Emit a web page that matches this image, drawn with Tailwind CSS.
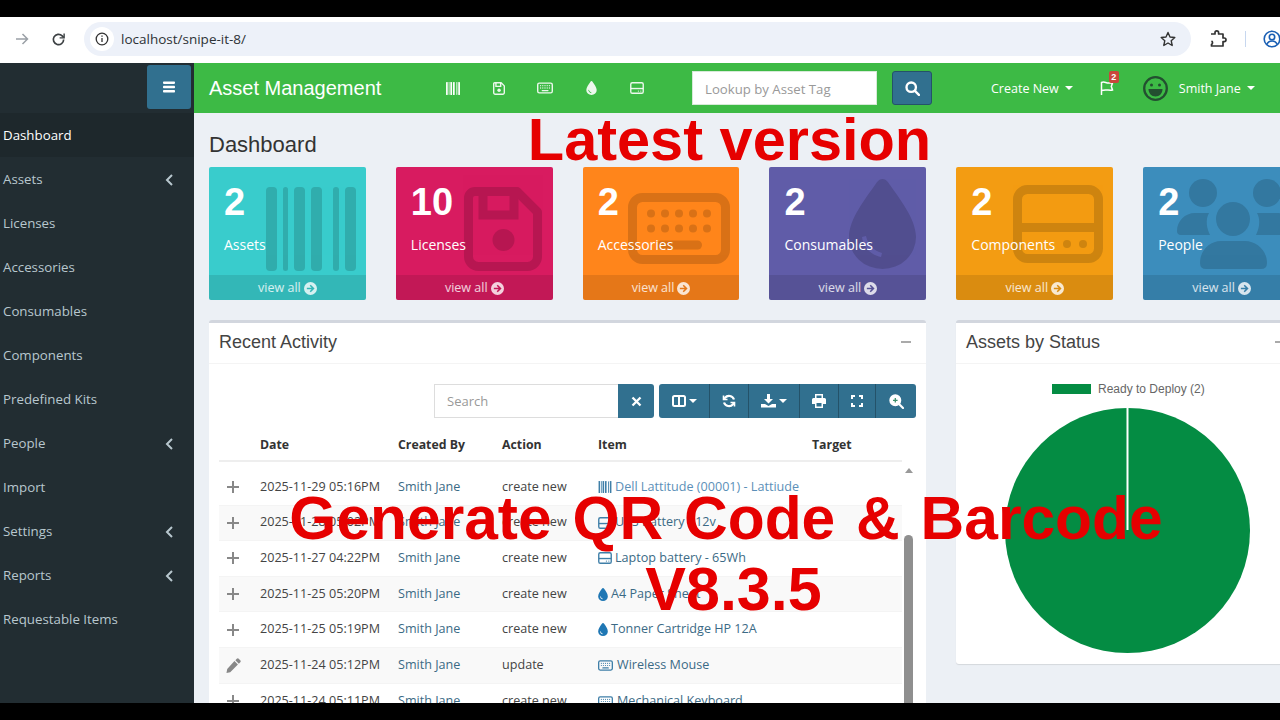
<!DOCTYPE html>
<html lang="en">
<head>
<meta charset="utf-8">
<title>Asset Management</title>
<script src="https://cdn.jsdelivr.net/npm/@tailwindcss/browser@4"></script>
</head>
<body class="bg-black">
<svg class="absolute w-0 h-0" aria-hidden="true">
  <symbol id="barcode" viewBox="0 0 90 84"><rect x="0" width="11" height="84" rx="4"/><rect x="17" width="5" height="84" rx="2.5"/><rect x="28" width="11" height="84" rx="4"/><rect x="45" width="11" height="84" rx="4"/><rect x="67" width="6" height="84" rx="3"/><rect x="79" width="11" height="84" rx="4"/></symbol>
  <symbol id="save" viewBox="0 0 78 84"><path fill="none" stroke="currentColor" stroke-width="9" stroke-linejoin="round" d="M11 4.5H53L73.500 25V69A10 10 0 0 1 63.500 79.500H14.500A10 10 0 0 1 4.500 69V11A6.500 6.500 0 0 1 11 4.500Z"/><path fill="none" stroke="currentColor" stroke-width="9" d="M19 6V28H50V6"/><circle cx="39.500" cy="53" r="11"/></symbol>
  <symbol id="keyboard" viewBox="0 0 102 71"><rect x="4.500" y="4.500" width="93" height="62" rx="10" fill="none" stroke="currentColor" stroke-width="9"/><g><circle cx="23" cy="20.500" r="4"/><circle cx="37" cy="20.500" r="4"/><circle cx="51" cy="20.500" r="4"/><circle cx="65" cy="20.500" r="4"/><circle cx="79" cy="20.500" r="4"/><circle cx="23" cy="35.500" r="4"/><circle cx="37" cy="35.500" r="4"/><circle cx="51" cy="35.500" r="4"/><circle cx="65" cy="35.500" r="4"/><circle cx="79" cy="35.500" r="4"/></g><rect x="29" y="47.500" width="45" height="9" rx="4.500"/></symbol>
  <symbol id="drop" viewBox="0 0 67 90"><path fill-rule="evenodd" d="M33.500 0C37 0 39 3 41 6C50 19 67 40 67 58A33.500 32 0 0 1 0 58C0 40 17 19 26 6C28 3 30 0 33.500 0ZM13 58C14 68 22 76 32 78L33 74C25 72 19 66 17 57Z"/></symbol>
  <symbol id="hdd" viewBox="0 0 90 78"><rect x="4.500" y="4.500" width="81" height="69" rx="10" fill="none" stroke="currentColor" stroke-width="9"/><rect x="5" y="38" width="80" height="9"/><circle cx="54" cy="59" r="4"/><circle cx="70" cy="59" r="4"/></symbol>
  <symbol id="users" viewBox="0 0 123 90"><circle cx="26" cy="14" r="14"/><circle cx="90" cy="14" r="14"/><circle cx="56" cy="40" r="17"/><path d="M0 52C0 42 8 34 18 34H32C28 41 30 50 33 56H4Q0 56 0 52Z"/><path d="M123 52C123 42 110 34 100 34H80C84 41 82 50 79 56H119Q123 56 123 52Z"/><path d="M23 84C23 72 32 62 44 62H68C80 62 90 72 90 84Q90 90 84 90H29Q23 90 23 84Z"/></symbol>
  <symbol id="go" viewBox="0 0 16 16"><path fill-rule="evenodd" d="M8 0a8 8 0 1 1 0 16A8 8 0 0 1 8 0ZM8.300 3.300 7 4.600 9.400 7H3.500v2h5.900L7 11.400l1.300 1.300L13 8Z"/></symbol>
  <symbol id="plus" viewBox="0 0 14 14"><path fill="none" stroke="currentColor" stroke-width="2" d="M7 1v12M1 7h12"/></symbol>
  <symbol id="pencil" viewBox="0 0 16 16"><path d="M11.500.8a1.500 1.500 0 0 1 2.100 0l1.600 1.600a1.500 1.500 0 0 1 0 2.100l-1.500 1.500L10 2.300ZM9 3.300 12.700 7l-8.200 8.200-4 .8.800-4.200Z"/></symbol>
  <symbol id="chev" viewBox="0 0 8 12"><path fill="none" stroke="currentColor" stroke-width="2" d="M6.500 1 1.500 6l5 5"/></symbol>
</svg>

<div class="relative w-[1280px] h-[720px] overflow-hidden flex flex-col bg-black font-['Open_Sans',sans-serif]">
  <!-- browser chrome -->
  <div class="h-[17px] shrink-0 bg-black"></div>
  <div class="h-[46px] shrink-0 bg-white flex items-center pl-[15px] pb-[2px] text-[#3c4043]">
    <svg class="shrink-0 w-[14px] h-[14px] text-[#9aa0a6]" viewBox="0 0 14 14" fill="none" stroke="currentColor" stroke-width="1.500"><path d="M1 7h11.500M7.500 2l5 5-5 5"/></svg>
    <svg class="shrink-0 ml-[22px] w-[15px] h-[15px]" viewBox="0 0 16 16" fill="none" stroke="currentColor" stroke-width="1.800"><path d="M13.500 8a5.500 5.500 0 1 1-1.600-3.900L13.500 5.700"/><path d="M14 1.500v4.800H9.200" stroke-width="1.500"/></svg>
    <div class="shrink-0 ml-[18px] w-[1107px] h-[34px] rounded-full bg-[#edf1f9] flex items-center pl-[6px]">
      <div class="w-[24px] h-[24px] rounded-full bg-white flex items-center justify-center">
        <svg class="w-[14px] h-[14px]" viewBox="0 0 14 14" fill="none" stroke="#333" stroke-width="1.300"><circle cx="7" cy="7" r="5.800"/><path d="M7 6v4M7 3.600v1.200"/></svg>
      </div>
      <span class="ml-[7px] text-[13.500px] text-[#2d3136]">localhost/snipe-it-8/</span>
      <svg class="ml-auto mr-[15px] w-[16px] h-[16px]" viewBox="0 0 16 16" fill="none" stroke="#333" stroke-width="1.400" stroke-linejoin="round"><path d="M8 1.500 10 6l4.800.5-3.600 3.200 1 4.800L8 12l-4.200 2.500 1-4.800L1.200 6.500 6 6Z"/></svg>
    </div>
    <svg class="shrink-0 ml-[18px] w-[18px] h-[18px]" viewBox="0 0 18 18" fill="none" stroke="#333" stroke-width="1.700" stroke-linejoin="round"><path d="M2 4h4V2.700a1.800 1.800 0 0 1 3.600 0V4h4.400v4h1.200a1.800 1.800 0 0 1 0 3.600H14V16H2.500v-1.500a2 2 0 0 0 0-3.500V11"/></svg>
    <div class="shrink-0 ml-[18px] w-px h-[16px] bg-[#c7d7ef]"></div>
    <svg class="ml-[17px] w-[18px] h-[18px] shrink-0" viewBox="0 0 18 18" fill="none" stroke="#1a5fb4" stroke-width="1.600"><circle cx="9" cy="9" r="7.800"/><circle cx="9" cy="7" r="2.700"/><path d="M3.800 14.500c1-2.500 3-3.500 5.200-3.500s4.200 1 5.200 3.500"/></svg>
  </div>

  <div class="h-[640px] shrink-0 flex overflow-hidden">
    <!-- sidebar -->
    <aside class="w-[194px] shrink-0 bg-[#222d32] text-[#b8c7ce] text-[13.300px]">
      <div class="h-[50px] flex items-start justify-end pt-[2px] pr-[3px]">
        <div class="w-[44px] h-[44px] rounded-[3px] bg-[#31708f] flex items-center justify-center">
          <svg class="w-[12px] h-[12px]" viewBox="0 0 12 12" fill="#fff"><rect y="0.500" width="12" height="2.400" rx="0.800"/><rect y="4.800" width="12" height="2.400" rx="0.800"/><rect y="9.100" width="12" height="2.400" rx="0.800"/></svg>
        </div>
      </div>
      <nav>
        <div class="h-[44px] pt-[2px] pl-[3px] flex items-center bg-[#1e282c] text-white">Dashboard</div>
        <div class="h-[44px] pt-[2px] pl-[3px] pr-[20px] flex items-center justify-between">Assets<svg class="w-[9px] h-[12px]"><use href="#chev"/></svg></div>
        <div class="h-[44px] pt-[2px] pl-[3px] flex items-center">Licenses</div>
        <div class="h-[44px] pt-[2px] pl-[3px] flex items-center">Accessories</div>
        <div class="h-[44px] pt-[2px] pl-[3px] flex items-center">Consumables</div>
        <div class="h-[44px] pt-[2px] pl-[3px] flex items-center">Components</div>
        <div class="h-[44px] pt-[2px] pl-[3px] flex items-center">Predefined Kits</div>
        <div class="h-[44px] pt-[2px] pl-[3px] pr-[20px] flex items-center justify-between">People<svg class="w-[9px] h-[12px]"><use href="#chev"/></svg></div>
        <div class="h-[44px] pt-[2px] pl-[3px] flex items-center">Import</div>
        <div class="h-[44px] pt-[2px] pl-[3px] pr-[20px] flex items-center justify-between">Settings<svg class="w-[9px] h-[12px]"><use href="#chev"/></svg></div>
        <div class="h-[44px] pt-[2px] pl-[3px] pr-[20px] flex items-center justify-between">Reports<svg class="w-[9px] h-[12px]"><use href="#chev"/></svg></div>
        <div class="h-[44px] pt-[2px] pl-[3px] flex items-center">Requestable Items</div>
      </nav>
    </aside>

    <div class="w-[1086px] shrink-0 flex flex-col overflow-hidden">
      <!-- top nav -->
      <header class="h-[50px] shrink-0 bg-[#3dba45] flex items-center text-white pl-[15px]">
        <span class="w-[232px] shrink-0 text-[20px] font-['Liberation_Sans',sans-serif] leading-none">Asset Management</span>
        <div class="w-[24px] flex justify-center"><svg class="w-[14px] h-[13px] fill-current text-white"><use href="#barcode"/></svg></div>
        <div class="ml-[22px] w-[24px] flex justify-center"><svg class="w-[12px] h-[13px] fill-current text-white/90"><use href="#save"/></svg></div>
        <div class="ml-[22px] w-[24px] flex justify-center"><svg class="w-[16px] h-[12px] fill-current text-white/90"><use href="#keyboard"/></svg></div>
        <div class="ml-[22px] w-[24px] flex justify-center"><svg class="w-[11px] h-[14px] fill-current text-white/90"><use href="#drop"/></svg></div>
        <div class="ml-[22px] w-[24px] flex justify-center"><svg class="w-[14px] h-[12px] fill-current text-white/90"><use href="#hdd"/></svg></div>
        <input class="ml-[43px] w-[185px] h-[34px] shrink-0 bg-white border border-[#d7ead8] px-[12px] pt-[2px] text-[13.200px] placeholder:text-[#999] outline-none" placeholder="Lookup by Asset Tag">
        <div class="ml-[15px] w-[40px] h-[34px] shrink-0 rounded-[3px] bg-[#31708f] border border-[#245269] flex items-center justify-center">
          <svg class="w-[15px] h-[15px]" viewBox="0 0 14 14" fill="none" stroke="#fff" stroke-width="2.200"><circle cx="5.800" cy="5.800" r="4.400"/><path d="M9 9l4 4" stroke-linecap="round"/></svg>
        </div>
        <span class="ml-[59px] pt-[2px] text-[12.500px] whitespace-nowrap">Create New</span>
        <span class="ml-[6px] border-x-[4px] border-x-transparent border-t-[4px] border-t-white"></span>
        <div class="relative ml-[27px] w-[14px] h-[14px] shrink-0">
          <svg class="w-[14px] h-[14px]" viewBox="0 0 14 14" fill="none" stroke="#fff" stroke-width="1.500"><path d="M1.500 14V1.500c3-1.500 4.500 1 8 .5h3l-1.200 3.500 1.200 3.500c-3.500.8-6.500-1-11 .5"/></svg>
          <span class="absolute left-[9px] top-[-10px] w-[10px] h-[12px] rounded-[2px] bg-[#c9473b] text-[9px] leading-[12px] text-center font-bold font-['Liberation_Sans',sans-serif]">2</span>
        </div>
        <svg class="ml-[29px] w-[25px] h-[25px] shrink-0" viewBox="0 0 25 25"><circle cx="12.500" cy="12.500" r="11.300" fill="none" stroke="#234f30" stroke-width="2.300"/><circle cx="8.500" cy="9" r="1.500" fill="#234f30"/><circle cx="16.500" cy="9" r="1.500" fill="#234f30"/><path d="M5.500 13h14c0 4.500-3 7.500-7 7.500s-7-3-7-7.500Z" fill="#234f30"/></svg>
        <span class="ml-[11px] pt-[2px] text-[12.500px] whitespace-nowrap">Smith Jane</span>
        <span class="ml-[6px] border-x-[4px] border-x-transparent border-t-[4px] border-t-white"></span>
      </header>

      <!-- content -->
      <main class="flex-1 bg-[#ecf0f5] pl-[15px] overflow-hidden">
        <h1 class="h-[54px] w-[400px] flex items-center pt-[8px] text-[22px] text-[#333] font-['Liberation_Sans',sans-serif]">Dashboard</h1>
        <div class="w-[1091px] grid grid-cols-6 gap-x-[30px]">
          <div class="relative h-[133px] rounded-[2px] overflow-hidden bg-[#39cccc] text-white">
            <svg class="absolute left-[57px] top-[20px] w-[90px] h-[84px] fill-current text-black opacity-15"><use href="#barcode"/></svg>
            <div class="relative pl-[15px] pt-[15px] h-[108px]"><div class="text-[38px] leading-[40px] font-bold font-['Liberation_Sans',sans-serif]">2</div><div class="mt-[13px] text-[14px] leading-[20px]">Assets</div></div>
            <div class="relative h-[25px] pt-[1px] bg-black/10 flex items-center justify-center gap-[3px] text-[12.500px] text-white/80">view all<svg class="w-[13px] h-[13px] fill-current"><use href="#go"/></svg></div>
          </div>
          <div class="relative h-[133px] rounded-[2px] overflow-hidden bg-[#d81b60] text-white">
            <svg class="absolute left-[68px] top-[20px] w-[78px] h-[84px] fill-current text-black opacity-15"><use href="#save"/></svg>
            <div class="relative pl-[15px] pt-[15px] h-[108px]"><div class="text-[38px] leading-[40px] font-bold font-['Liberation_Sans',sans-serif]">10</div><div class="mt-[13px] text-[14px] leading-[20px]">Licenses</div></div>
            <div class="relative h-[25px] pt-[1px] bg-black/10 flex items-center justify-center gap-[3px] text-[12.500px] text-white/80">view all<svg class="w-[13px] h-[13px] fill-current"><use href="#go"/></svg></div>
          </div>
          <div class="relative h-[133px] rounded-[2px] overflow-hidden bg-[#ff851b] text-white">
            <svg class="absolute left-[45px] top-[26px] w-[102px] h-[71px] fill-current text-black opacity-15"><use href="#keyboard"/></svg>
            <div class="relative pl-[15px] pt-[15px] h-[108px]"><div class="text-[38px] leading-[40px] font-bold font-['Liberation_Sans',sans-serif]">2</div><div class="mt-[13px] text-[14px] leading-[20px]">Accessories</div></div>
            <div class="relative h-[25px] pt-[1px] bg-black/10 flex items-center justify-center gap-[3px] text-[12.500px] text-white/80">view all<svg class="w-[13px] h-[13px] fill-current"><use href="#go"/></svg></div>
          </div>
          <div class="relative h-[133px] rounded-[2px] overflow-hidden bg-[#605ca8] text-white">
            <svg class="absolute left-[80px] top-[12px] w-[67px] h-[90px] fill-current text-black opacity-15"><use href="#drop"/></svg>
            <div class="relative pl-[15px] pt-[15px] h-[108px]"><div class="text-[38px] leading-[40px] font-bold font-['Liberation_Sans',sans-serif]">2</div><div class="mt-[13px] text-[14px] leading-[20px]">Consumables</div></div>
            <div class="relative h-[25px] pt-[1px] bg-black/10 flex items-center justify-center gap-[3px] text-[12.500px] text-white/80">view all<svg class="w-[13px] h-[13px] fill-current"><use href="#go"/></svg></div>
          </div>
          <div class="relative h-[133px] rounded-[2px] overflow-hidden bg-[#f39c12] text-white">
            <svg class="absolute left-[57px] top-[18px] w-[90px] h-[78px] fill-current text-black opacity-15"><use href="#hdd"/></svg>
            <div class="relative pl-[15px] pt-[15px] h-[108px]"><div class="text-[38px] leading-[40px] font-bold font-['Liberation_Sans',sans-serif]">2</div><div class="mt-[13px] text-[14px] leading-[20px]">Components</div></div>
            <div class="relative h-[25px] pt-[1px] bg-black/10 flex items-center justify-center gap-[3px] text-[12.500px] text-white/80">view all<svg class="w-[13px] h-[13px] fill-current"><use href="#go"/></svg></div>
          </div>
          <div class="relative h-[133px] rounded-[2px] overflow-hidden bg-[#3c8dbc] text-white">
            <svg class="absolute left-[34px] top-[12px] w-[123px] h-[90px] fill-current text-black opacity-15"><use href="#users"/></svg>
            <div class="relative pl-[15px] pt-[15px] h-[108px]"><div class="text-[38px] leading-[40px] font-bold font-['Liberation_Sans',sans-serif]">2</div><div class="mt-[13px] text-[14px] leading-[20px]">People</div></div>
            <div class="relative h-[25px] pt-[1px] bg-black/10 flex items-center justify-center gap-[3px] text-[12.500px] text-white/80">view all<svg class="w-[13px] h-[13px] fill-current"><use href="#go"/></svg></div>
          </div>
        </div>

        <div class="mt-[20px] w-[1091px] flex gap-[30px] items-start">
          <!-- recent activity -->
          <section class="w-[717px] shrink-0 h-[420px] bg-white border-t-[3px] border-[#d2d6de] rounded-[3px]">
            <div class="h-[41px] pb-[2px] border-b border-[#f4f4f4] pl-[10px] pr-[15px] flex items-center justify-between">
              <h2 class="text-[18px] text-[#444] font-['Liberation_Sans',sans-serif]">Recent Activity</h2>
              <span class="w-[10px] h-[1.500px] bg-[#aaa]"></span>
            </div>
            <div class="px-[10px] pt-[20px]">
              <div class="flex justify-end">
                <div class="flex h-[34px]">
                  <div class="w-[184px] border border-[#ddd] border-r-0 px-[12px] pt-[1px] flex items-center text-[13px] text-[#999]">Search</div>
                  <div class="w-[36px] bg-[#31708f] rounded-r-[3px] flex items-center justify-center">
                    <svg class="w-[11px] h-[11px]" viewBox="0 0 11 11" stroke="#fff" stroke-width="2.300"><path d="M1.500 1.500l8 8M9.500 1.500l-8 8"/></svg>
                  </div>
                </div>
                <div class="ml-[5px] flex h-[34px] rounded-[3px] overflow-hidden bg-[#31708f] divide-x divide-[#245269]">
                  <div class="w-[51px] flex items-center justify-center gap-[3px]"><svg class="w-[14px] h-[12px]" viewBox="0 0 14 12" fill="none" stroke="#fff" stroke-width="2"><rect x="1" y="1" width="12" height="10" rx="1.500"/><path d="M7 1v10"/></svg><span class="border-x-[4px] border-x-transparent border-t-[4px] border-t-white"></span></div>
                  <div class="w-[39px] flex items-center justify-center"><svg class="w-[14px] h-[14px]" viewBox="0 0 14 14" fill="none" stroke="#fff" stroke-width="2.200"><path d="M12 5.500A5.200 5.200 0 0 0 3 3.800L1.700 5.200M2 8.500A5.200 5.200 0 0 0 11 10.200l1.300-1.400"/><path d="M1.500 1.500v4h4M12.500 12.500v-4h-4" stroke-width="1.600"/></svg></div>
                  <div class="w-[51px] flex items-center justify-center gap-[3px]"><svg class="w-[15px] h-[14px]" viewBox="0 0 15 14" fill="#fff"><path d="M6 0h3v5h3L7.500 9.500 3 5h3Z"/><path d="M0 10h4l3.500 2 3.500-2h4v3.500H0Z"/></svg><span class="border-x-[4px] border-x-transparent border-t-[4px] border-t-white"></span></div>
                  <div class="w-[39px] flex items-center justify-center"><svg class="w-[14px] h-[14px]" viewBox="0 0 14 14" fill="#fff"><path fill-rule="evenodd" d="M3 0h8v4h1.500A1.500 1.500 0 0 1 14 5.500V10h-3v4H3v-4H0V5.500A1.500 1.500 0 0 1 1.500 4H3ZM4.500 1.500V4h5V1.500ZM4.500 9v3.500h5V9Z"/></svg></div>
                  <div class="w-[37px] flex items-center justify-center"><svg class="w-[12px] h-[12px]" viewBox="0 0 12 12" fill="none" stroke="#fff" stroke-width="2"><path d="M1 4V1h3M8 1h3v3M11 8v3H8M4 11H1V8"/></svg></div>
                  <div class="w-[40px] flex items-center justify-center"><svg class="w-[15px] h-[15px]" viewBox="0 0 15 15" fill="none" stroke="#fff" stroke-width="2.200"><circle cx="6.300" cy="6.300" r="4.900" fill="#fff"/><path d="M10 10l4 4" stroke-linecap="round"/><path d="M6.300 4v4.600M4 6.300h4.600" stroke="#3d8f6b" stroke-width="1.300"/></svg></div>
                </div>
              </div>
              <div class="mt-[8px] w-[683px] h-[36px] pt-[4px] grid grid-cols-[41px_138px_104px_96px_214px_1fr] items-center border-b-2 border-[#eee] text-[12.300px] font-bold text-[#333]">
                <span></span><span>Date</span><span>Created By</span><span>Action</span><span>Item</span><span>Target</span>
              </div>
              <div class="flex">
                <div class="w-[683px] shrink-0 pt-[8px] text-[12.600px] text-[#444]">
                  <div class="h-[35.600px] grid grid-cols-[41px_138px_104px_96px_214px_1fr] items-center border-b border-[#f4f4f4]">
                    <svg class="ml-[7px] w-[14px] h-[14px] text-[#888]"><use href="#plus"/></svg><span>2025-11-29 05:16PM</span><span class="text-[#3b6a85]">Smith Jane</span><span>create new</span><span class="flex items-center gap-[3px] text-[#5b8fb8] whitespace-nowrap"><svg class="w-[14px] h-[12px] fill-current text-[#3f7fa8]"><use href="#barcode"/></svg>Dell Lattitude (00001) - Lattiude</span><span></span>
                  </div>
                  <div class="h-[35.600px] grid grid-cols-[41px_138px_104px_96px_214px_1fr] items-center border-b border-[#f4f4f4] bg-[#f9f9f9]">
                    <svg class="ml-[7px] w-[14px] h-[14px] text-[#888]"><use href="#plus"/></svg><span>2025-11-28 05:02PM</span><span class="text-[#3b6a85]">Smith Jane</span><span>create new</span><span class="flex items-center gap-[3px] text-[#3b6a85] whitespace-nowrap"><svg class="w-[14px] h-[12px] fill-current text-[#3f7fa8]"><use href="#hdd"/></svg>UPS Battery - 12v</span><span></span>
                  </div>
                  <div class="h-[35.600px] grid grid-cols-[41px_138px_104px_96px_214px_1fr] items-center border-b border-[#f4f4f4]">
                    <svg class="ml-[7px] w-[14px] h-[14px] text-[#888]"><use href="#plus"/></svg><span>2025-11-27 04:22PM</span><span class="text-[#3b6a85]">Smith Jane</span><span>create new</span><span class="flex items-center gap-[3px] text-[#3b6a85] whitespace-nowrap"><svg class="w-[14px] h-[12px] fill-current text-[#3f7fa8]"><use href="#hdd"/></svg>Laptop battery - 65Wh</span><span></span>
                  </div>
                  <div class="h-[35.600px] grid grid-cols-[41px_138px_104px_96px_214px_1fr] items-center border-b border-[#f4f4f4] bg-[#f9f9f9]">
                    <svg class="ml-[7px] w-[14px] h-[14px] text-[#888]"><use href="#plus"/></svg><span>2025-11-25 05:20PM</span><span class="text-[#3b6a85]">Smith Jane</span><span>create new</span><span class="flex items-center gap-[3px] text-[#3b6a85] whitespace-nowrap"><svg class="w-[10px] h-[13px] fill-current text-[#1f77b4]"><use href="#drop"/></svg>A4 Paper Sheet</span><span></span>
                  </div>
                  <div class="h-[35.600px] grid grid-cols-[41px_138px_104px_96px_214px_1fr] items-center border-b border-[#f4f4f4]">
                    <svg class="ml-[7px] w-[14px] h-[14px] text-[#888]"><use href="#plus"/></svg><span>2025-11-25 05:19PM</span><span class="text-[#3b6a85]">Smith Jane</span><span>create new</span><span class="flex items-center gap-[3px] text-[#3b6a85] whitespace-nowrap"><svg class="w-[10px] h-[13px] fill-current text-[#1f77b4]"><use href="#drop"/></svg>Tonner Cartridge HP 12A</span><span></span>
                  </div>
                  <div class="h-[35.600px] grid grid-cols-[41px_138px_104px_96px_214px_1fr] items-center border-b border-[#f4f4f4] bg-[#f9f9f9]">
                    <svg class="ml-[7px] w-[15px] h-[15px] fill-current text-[#888]"><use href="#pencil"/></svg><span>2025-11-24 05:12PM</span><span class="text-[#3b6a85]">Smith Jane</span><span>update</span><span class="flex items-center gap-[4px] text-[#3b6a85] whitespace-nowrap"><svg class="w-[15px] h-[11px] fill-current text-[#3f7fa8]"><use href="#keyboard"/></svg>Wireless Mouse</span><span></span>
                  </div>
                  <div class="h-[35.600px] grid grid-cols-[41px_138px_104px_96px_214px_1fr] items-center">
                    <svg class="ml-[7px] w-[14px] h-[14px] text-[#888]"><use href="#plus"/></svg><span>2025-11-24 05:11PM</span><span class="text-[#3b6a85]">Smith Jane</span><span>create new</span><span class="flex items-center gap-[4px] text-[#3b6a85] whitespace-nowrap"><svg class="w-[15px] h-[11px] fill-current text-[#3f7fa8]"><use href="#keyboard"/></svg>Mechanical Keyboard</span><span></span>
                  </div>
                </div>
                <div class="w-[14px] shrink-0 pl-[2px] pt-[6px]">
                  <div class="ml-[1px] w-0 h-0 border-x-[4px] border-x-transparent border-b-[5px] border-b-[#999]"></div>
                  <div class="mt-[62px] w-[9px] h-[200px] rounded-t-[5px] bg-[#8f8f8f]"></div>
                </div>
              </div>
            </div>
          </section>

          <!-- assets by status -->
          <section class="w-[344px] shrink-0 h-[344px] bg-white border-t-[3px] border-[#d2d6de] rounded-[3px] shadow-[0_1px_1px_rgba(0,0,0,0.1)]">
            <div class="h-[41px] pb-[2px] border-b border-[#f4f4f4] pl-[10px] pr-[15px] flex items-center justify-between">
              <h2 class="text-[18px] text-[#444] font-['Liberation_Sans',sans-serif]">Assets by Status</h2>
              <span class="w-[10px] h-[1.500px] bg-[#aaa]"></span>
            </div>
            <div class="flex flex-col items-start pl-[49px]">
              <div class="mt-[19px] ml-[47px] flex items-center gap-[7px] h-[12px] text-[12px] text-[#666] font-['Liberation_Sans',sans-serif]">
                <span class="w-[39px] h-[10px] bg-[#048c43]"></span>Ready to Deploy (2)
              </div>
              <svg class="mt-[13px] w-[245px] h-[245px]" viewBox="0 0 245 245"><circle cx="122.500" cy="122.500" r="122.500" fill="#048c43"/><rect x="121.500" y="0" width="2" height="122" fill="#fff"/></svg>
            </div>
          </section>
        </div>
      </main>
    </div>
  </div>
  <div class="h-[17px] shrink-0 bg-black relative z-10"></div>

  <!-- video captions laid over the screenshot -->
  <div class="absolute z-20 left-0 top-[104px] w-[1459px] text-center text-[59.500px] leading-[72px] font-bold text-[#e60000] font-['Liberation_Sans',sans-serif]">Latest version</div>
  <div class="absolute z-20 left-0 top-[482px] w-[1452px] text-center text-[60.500px] leading-[72px] font-bold text-[#e60000] font-['Liberation_Sans',sans-serif] [word-spacing:4px] whitespace-nowrap">Generate QR Code &amp; Barcode</div>
  <div class="absolute z-20 left-0 top-[553px] w-[1467px] text-center text-[61px] leading-[72px] font-bold text-[#e60000] font-['Liberation_Sans',sans-serif]">V8.3.5</div>
</div>
</body>
</html>
